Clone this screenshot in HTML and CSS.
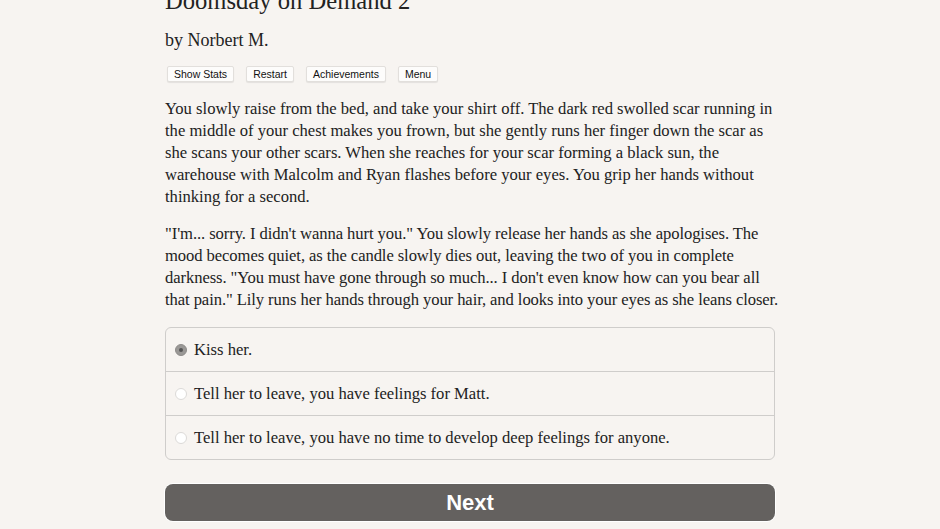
FILE: index.html
```html
<!DOCTYPE html>
<html>
<head>
<meta charset="utf-8">
<link rel="stylesheet" href="styles.css">
</head>
<body>
<div class="page">
  <h1 class="title">Doomsday on Demand 2</h1>
  <h2 class="author">by Norbert M.</h2>
  <div class="toolbar">
    <button class="tb-btn">Show Stats</button>
    <button class="tb-btn">Restart</button>
    <button class="tb-btn">Achievements</button>
    <button class="tb-btn">Menu</button>
  </div>
  <p class="story">You slowly raise from the bed, and take your shirt off. The dark red swolled scar running in the middle of your chest makes you frown, but she gently runs her finger down the scar as she scans your other scars. When she reaches for your scar forming a black sun, the warehouse with Malcolm and Ryan flashes before your eyes. You grip her hands without thinking for a second.</p>
  <p class="story story-tight">"I'm... sorry. I didn't wanna hurt you." You slowly release her hands as she apologises. The mood becomes quiet, as the candle slowly dies out, leaving the two of you in complete darkness. "You must have gone through so much... I don't even know how can you bear all that pain." Lily runs her hands through your hair, and looks into your eyes as she leans closer.</p>
  <div class="choices">
    <label class="choice"><span class="radio checked"></span><span>Kiss her.</span></label>
    <label class="choice"><span class="radio"></span><span>Tell her to leave, you have feelings for Matt.</span></label>
    <label class="choice"><span class="radio"></span><span>Tell her to leave, you have no time to develop deep feelings for anyone.</span></label>
  </div>
  <button class="next">Next</button>
</div>
</body>
</html>
```
FILE: styles.css
```css
html, body {
  margin: 0;
  padding: 0;
  background: #f7f4f1;
}
body {
  font-family: "Liberation Serif", "Times New Roman", serif;
  color: #222;
  overflow: hidden;
  height: 529px;
}
.page {
  width: 610px;
  margin-left: 165px;
}
.title {
  font-weight: normal;
  font-size: 24.6px;
  line-height: 30px;
  margin: -14px 0 0 0;
  color: #222;
  white-space: nowrap;
}
.author {
  font-weight: normal;
  font-size: 18px;
  line-height: 22px;
  margin: 13px 0 0 0;
}
.toolbar {
  display: flex;
  gap: 12px;
  margin: 15px 0 0 2px;
}
.tb-btn {
  font-family: "Liberation Sans", Arial, sans-serif;
  font-size: 10.5px;
  color: #111;
  background: #fdfcfb;
  border: 1px solid #e2dfdc;
  border-radius: 2px;
  box-shadow: 0 1px 1px rgba(0,0,0,0.08);
  padding: 0 6px;
  height: 16px;
  line-height: 14px;
}
.story {
  font-size: 16.6px;
  line-height: 22px;
  margin: 16px -10px 15px 0;
}
.story + .story {
  margin-top: 0;
}
.story-tight {
  letter-spacing: -0.08px;
}
.choices {
  border: 1px solid #cfcdcb;
  border-radius: 6px;
  margin-top: 16px;
}
.choice {
  display: flex;
  align-items: center;
  height: 43px;
  padding-left: 9px;
  font-size: 16.6px;
  gap: 7px;
  border-top: 1px solid #cfcdcb;
}
.choice:first-child {
  border-top: none;
}
.radio {
  width: 12px;
  height: 12px;
  border-radius: 50%;
  background: #fff;
  border: 1px solid #dcdad8;
  box-sizing: border-box;
  display: inline-block;
  flex: none;
}
.radio.checked {
  background: #9a9896;
  border-color: #8e8c8a;
  position: relative;
}
.radio.checked::after {
  content: "";
  position: absolute;
  left: 3px;
  top: 3px;
  width: 4px;
  height: 4px;
  border-radius: 50%;
  background: #555;
}
.next {
  display: block;
  width: 610px;
  height: 37px;
  margin-top: 24px;
  background: #64615f;
  color: #fff;
  border: none;
  border-radius: 8px;
  font-family: "Liberation Sans", Arial, sans-serif;
  font-weight: bold;
  font-size: 22px;
  box-shadow: 0 0 0 1px #fff;
}
```
